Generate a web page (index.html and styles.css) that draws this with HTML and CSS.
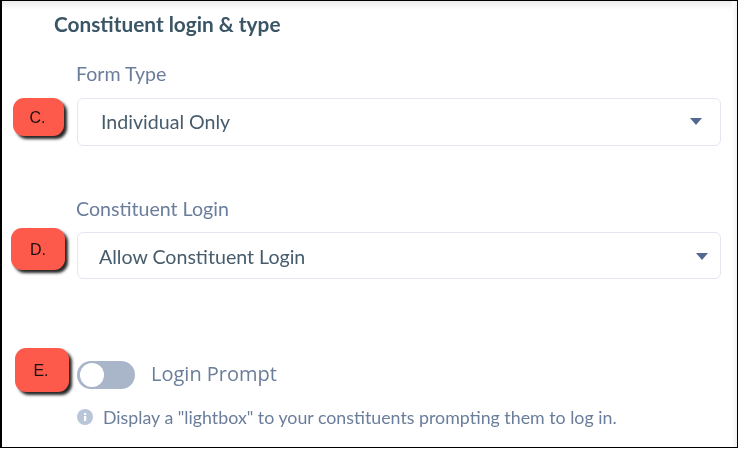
FILE: index.html
```html
<!DOCTYPE html>
<html lang="en">
<head>
<meta charset="utf-8">
<title>Constituent login &amp; type</title>
<link rel="stylesheet" href="styles.css">
</head>
<body>
<main class="frame">
  <h2 class="title">Constituent login &amp; type</h2>
  <section class="field field-type">
    <div class="label">Form Type</div>
    <div class="select select-type"><span>Individual Only</span><i class="caret"></i></div>
    <div class="badge badge-c">C.</div>
  </section>
  <section class="field field-login">
    <div class="label">Constituent Login</div>
    <div class="select select-login"><span>Allow Constituent Login</span><i class="caret"></i></div>
    <div class="badge badge-d">D.</div>
  </section>
  <section class="prompt">
    <div class="toggle-row">
      <div class="toggle"><span class="knob"></span></div>
      <span class="toggle-label">Login Prompt</span>
    </div>
    <div class="hint">
      <svg class="info" viewBox="0 0 16 16" width="16" height="16" aria-hidden="true"><circle cx="8" cy="8" r="8" fill="#b9c6da"/><rect x="7" y="7" width="2.2" height="5" fill="#fff"/><rect x="7" y="4" width="2.2" height="2" fill="#fff"/></svg>
      <span>Display a "lightbox" to your constituents prompting them to log in.</span>
    </div>
    <div class="badge badge-e">E.</div>
  </section>
</main>
</body>
</html>
```
FILE: styles.css
```css
html, body { margin: 0; padding: 0; background: #fff; }
body { width: 739px; height: 449px; overflow: hidden; font-family: Lato, sans-serif; }
.frame {
  box-sizing: border-box; width: 738px; height: 448px;
  border: 1px solid #000; border-left-width: 2px;
  padding: 13px 16px 0 52px;
  background:
    linear-gradient(#ececec, #fff 9px),
    #fff;
  position: relative;
}
.frame::after {
  content: ""; position: absolute; top: 0; right: 0; bottom: 0; width: 5px;
  background: linear-gradient(to right, #fff, #f0f0f0);
}
.frame > * { filter: blur(0.35px); }
.title { margin: 0; font-size: 20.8px; line-height: 20px; font-weight: 700; color: #3a5566; }
.field { position: relative; margin-left: 22px; }
.field-type { margin-top: 28px; }
.field-login { margin-top: 51px; }
.label { font-size: 19.6px; line-height: 24px; color: #6a7d9b; }
.select {
  box-sizing: border-box; height: 48px; margin-top: 12px; margin-left: 1px;
  border: 1px solid #e3e6f0; border-radius: 6px; background: #fff;
  display: flex; align-items: center; justify-content: space-between;
  font-size: 19.6px; color: #465c6c;
}
.select-type { padding: 0 18px 2px 23px; }
.select-login { padding: 2px 12px 0 21px; height: 47px; margin-top: 11px; }
.caret { width: 0; height: 0; border-left: 6px solid transparent; border-right: 6px solid transparent; border-top: 7px solid #52688f; }
.badge {
  box-sizing: border-box; padding-top: 2px;
  position: absolute; width: 51px; height: 38px; border-radius: 11px; background: #fd5a4c;
  box-shadow: 3px 3px 3px rgba(0,0,0,.85);
  display: flex; align-items: center; justify-content: center;
  font-family: "Liberation Sans", Arial, sans-serif; font-size: 16px; color: #1a1010;
}
.badge-c { left: -63px; top: 36px; padding-right: 2px; }
.badge-d { left: -65px; top: 31px; width: 54px; height: 42px; }
.badge-e { left: -62px; top: -13px; width: 54px; height: 44px; padding-right: 2px; }
.prompt { position: relative; margin: 82px 0 0 23px; }
.toggle-row { display: flex; align-items: center; gap: 16px; }
.toggle { width: 58px; height: 28px; border-radius: 14px; background: #a9b5c9; position: relative; }
.knob { position: absolute; left: 3px; top: 2px; width: 24px; height: 24px; border-radius: 50%; background: #fff; }
.toggle-label { padding-bottom: 2px; font-size: 20px; line-height: 26px; color: #6a7d9b; font-family: "Open Sans", sans-serif; }
.hint { display: flex; align-items: center; gap: 10px; margin-top: 19px; font-size: 17.8px; line-height: 18px; color: #6a7d9b; }
.info { flex: none; }
```
